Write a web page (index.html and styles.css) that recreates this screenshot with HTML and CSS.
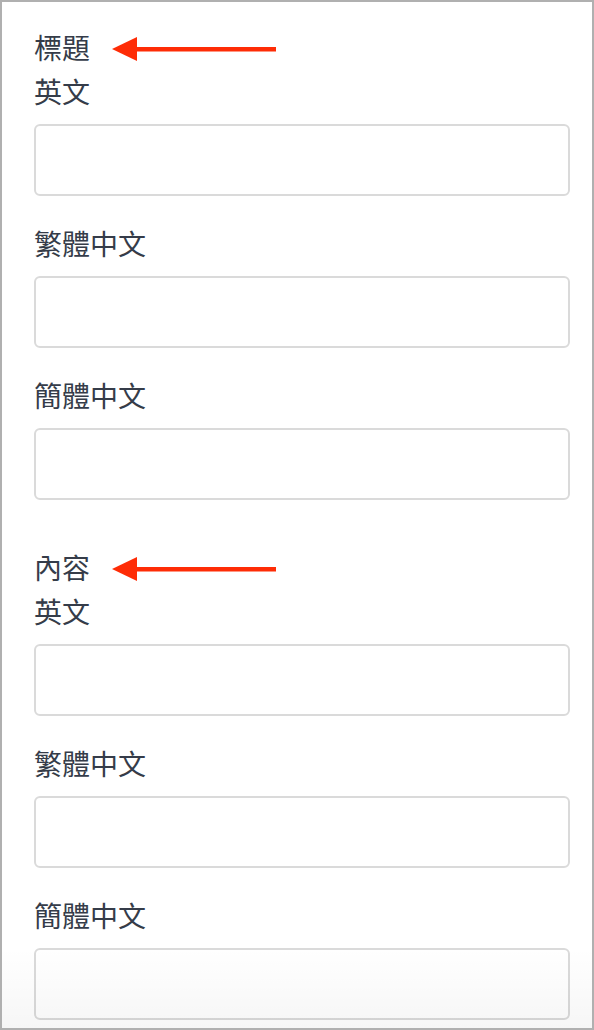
FILE: index.html
```html
<!DOCTYPE html>
<html lang="zh-Hant">
<head>
<meta charset="utf-8">
<link rel="stylesheet" href="styles.css">
</head>
<body>
<div class="frame">
  <section class="section">
    <div class="heading">
      <span class="heading-text">標題</span>
      <svg class="arrow" width="164" height="26" viewBox="0 0 164 26"><polygon points="0,13 25,1 25,25" fill="#fe2c06"/><rect x="24" y="11" width="140" height="4.5" fill="#fe2c06"/></svg>
    </div>
    <div class="field"><label class="label">英文</label><div class="input"></div></div>
    <div class="field"><label class="label">繁體中文</label><div class="input"></div></div>
    <div class="field"><label class="label">簡體中文</label><div class="input"></div></div>
  </section>
  <section class="section">
    <div class="heading">
      <span class="heading-text">內容</span>
      <svg class="arrow" width="164" height="26" viewBox="0 0 164 26"><polygon points="0,13 25,1 25,25" fill="#fe2c06"/><rect x="24" y="11" width="140" height="4.5" fill="#fe2c06"/></svg>
    </div>
    <div class="field"><label class="label">英文</label><div class="input"></div></div>
    <div class="field"><label class="label">繁體中文</label><div class="input"></div></div>
    <div class="field"><label class="label">簡體中文</label><div class="input"></div></div>
  </section>
  <div class="fade"></div>
</div>
</body>
</html>
```
FILE: styles.css
```css
html, body {
  margin: 0;
  padding: 0;
  background: #ffffff;
}
.frame {
  position: relative;
  box-sizing: border-box;
  width: 594px;
  height: 1030px;
  border: 2px solid #b0b0b0;
  padding: 28px 22px 0 32px;
  overflow: hidden;
  font-family: "Noto Sans CJK TC", "Noto Sans", sans-serif;
  color: #353c49;
  display: flex;
  flex-direction: column;
  gap: 50px;
}
.section {
  display: flex;
  flex-direction: column;
  gap: 8px;
}
.section .field + .field {
  margin-top: 22px;
}
.heading {
  display: flex;
  align-items: center;
  gap: 22px;
  height: 36px;
}
.heading-text, .label {
  font-size: 28px;
  line-height: 34px;
  padding-bottom: 2px;
  font-weight: 400;
}
.arrow {
  display: block;
  margin-top: 1px;
}
.field {
  display: flex;
  flex-direction: column;
  gap: 14px;
}
.input {
  box-sizing: border-box;
  height: 72px;
  width: 536px;
  border: 2px solid #dadada;
  border-radius: 6px;
  background: #ffffff;
}
.fade {
  position: absolute;
  left: 0;
  right: 0;
  bottom: 0;
  height: 80px;
  background: linear-gradient(to bottom, rgba(0,0,0,0), rgba(0,0,0,0.035));
  pointer-events: none;
}
```
